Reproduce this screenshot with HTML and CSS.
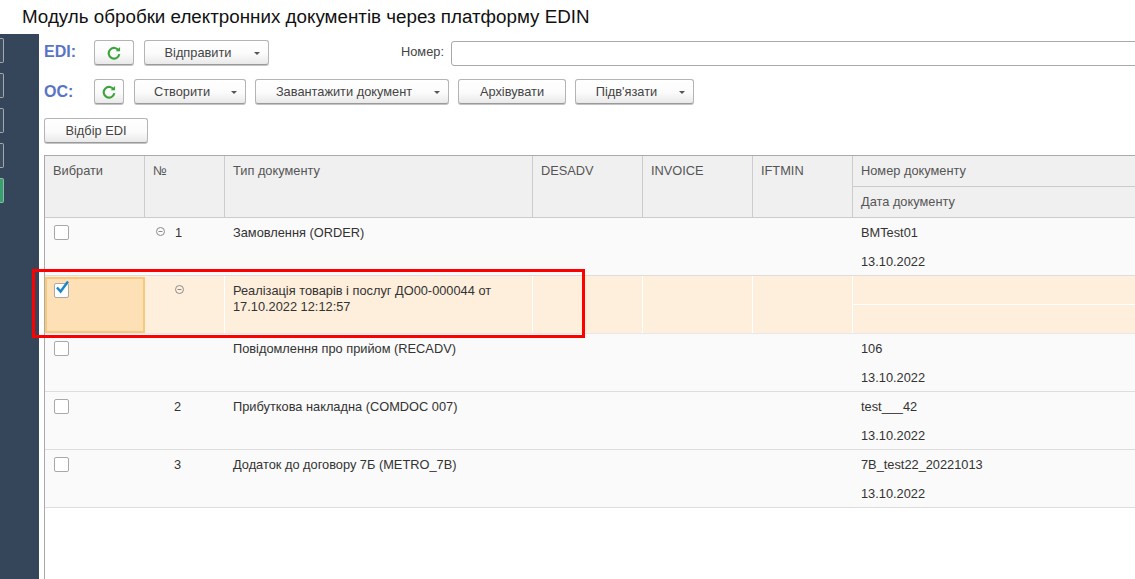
FILE: index.html
```html
<!DOCTYPE html>
<html lang="uk">
<head>
<meta charset="utf-8">
<title>EDIN</title>
<link rel="stylesheet" href="styles.css">
</head>
<body>
<h1 class="title">Модуль обробки електронних документів через платформу EDIN</h1>
<div class="main">
  <aside class="side">
    <span class="tab"></span><span class="tab"></span><span class="tab"></span><span class="tab"></span><span class="tab tab-on"></span>
  </aside>
  <div class="content">
    <div class="bar bar-edi">
      <span class="lbl lbl-edi">EDI:</span>
      <button class="btn btn-ref-wide"><svg class="ref" viewBox="0 0 12 12"><path d="M10.2 4.2A4.6 4.6 0 1 0 10.6 7" /><path class="ah" d="M7.4 4.6h3.8V.9z"/></svg></button>
      <button class="btn btn-send">Відправити<i class="car"></i></button>
      <span class="num-label">Номер:</span>
      <input class="num-input" type="text">
    </div>
    <div class="bar bar-oc">
      <span class="lbl lbl-oc">ОС:</span>
      <button class="btn btn-ref"><svg class="ref" viewBox="0 0 12 12"><path d="M10.2 4.2A4.6 4.6 0 1 0 10.6 7" /><path class="ah" d="M7.4 4.6h3.8V.9z"/></svg></button>
      <button class="btn btn-create">Створити<i class="car"></i></button>
      <button class="btn btn-load">Завантажити документ<i class="car"></i></button>
      <button class="btn btn-arch">Архівувати</button>
      <button class="btn btn-link">Підв'язати<i class="car"></i></button>
    </div>
    <div class="bar bar-filter">
      <button class="btn btn-filter">Відбір EDI</button>
    </div>
    <div class="grid">
      <div class="row head">
        <div class="c">Вибрати</div><div class="c">№</div><div class="c">Тип документу</div><div class="c">DESADV</div><div class="c">INVOICE</div><div class="c">IFTMIN</div>
        <div class="c stack"><div class="sub">Номер документу</div><div class="sub">Дата документу</div></div>
      </div>
      <div class="row">
        <div class="c"><span class="chk"></span></div>
        <div class="c n n-tree"><svg class="minus" viewBox="0 0 9 9"><circle cx="4.5" cy="4.5" r="4"/><path d="M2.5 4.5h4"/></svg>1</div>
        <div class="c">Замовлення (ORDER)</div><div class="c"></div><div class="c"></div><div class="c"></div>
        <div class="c stack"><div class="sub">BMTest01</div><div class="sub">13.10.2022</div></div>
      </div>
      <div class="row sel">
        <div class="c cur"><span class="chk"><svg class="tick" viewBox="0 0 16 16"><path d="M3 7.5l3.6 4L14 1.5"/></svg></span></div>
        <div class="c n"><svg class="minus" viewBox="0 0 9 9"><circle cx="4.5" cy="4.5" r="4"/><path d="M2.5 4.5h4"/></svg></div>
        <div class="c">Реалізація товарів і послуг ДО00-000044 от 17.10.2022 12:12:57</div><div class="c"></div><div class="c"></div><div class="c"></div>
        <div class="c stack"><div class="sub"></div><div class="sub"></div></div>
      </div>
      <div class="row">
        <div class="c"><span class="chk"></span></div><div class="c n"></div>
        <div class="c">Повідомлення про прийом (RECADV)</div><div class="c"></div><div class="c"></div><div class="c"></div>
        <div class="c stack"><div class="sub">106</div><div class="sub">13.10.2022</div></div>
      </div>
      <div class="row">
        <div class="c"><span class="chk"></span></div><div class="c n">2</div>
        <div class="c">Прибуткова накладна (COMDOC 007)</div><div class="c"></div><div class="c"></div><div class="c"></div>
        <div class="c stack"><div class="sub">test___42</div><div class="sub">13.10.2022</div></div>
      </div>
      <div class="row">
        <div class="c"><span class="chk"></span></div><div class="c n">3</div>
        <div class="c">Додаток до договору 7Б (METRO_7B)</div><div class="c"></div><div class="c"></div><div class="c"></div>
        <div class="c stack"><div class="sub">7B_test22_20221013</div><div class="sub">13.10.2022</div></div>
      </div>
    </div>
  </div>
</div>
<div class="mark"></div>
</body>
</html>
```
FILE: styles.css
```css
* { box-sizing: border-box; }
html, body { margin: 0; height: 100%; overflow: hidden; background: #fff; }
body { display: flex; flex-direction: column; width: 1135px; height: 579px; font: 12.8px/16px "Liberation Sans", Arial, sans-serif; color: #333; position: relative; }
.title { margin: 0; height: 34px; padding: 6px 0 0 22px; font: 400 18.8px/21px "Liberation Sans", Arial, sans-serif; color: #111; white-space: nowrap; flex: none; }
.main { flex: 1; display: flex; min-height: 0; }
.side { width: 39px; flex: none; background: #35465a; padding-top: 4px; display: flex; flex-direction: column; gap: 10px; align-items: flex-start; }
.tab { width: 4px; height: 25px; background: #3f4f62; border: 1px solid #a2a8ae; border-left: 0; border-radius: 0 2px 2px 0; }
.tab-on { background: #3a9f70; border-color: #8fb8a4; }
.content { flex: 1; min-width: 0; padding-left: 5px; display: flex; flex-direction: column; overflow: hidden; }
.bar { display: flex; align-items: flex-start; flex: none; white-space: nowrap; }
.bar-edi { height: 45px; padding-top: 6px; }
.bar-oc { height: 39px; }
.bar-filter { height: 37px; }
.lbl { font: 700 16px/20px "Liberation Sans", Arial, sans-serif; color: #5a74c4; width: 50px; flex: none; }
.lbl-edi { padding-top: 2px; }
.lbl-oc { padding-top: 3px; }
.btn { height: 25px; flex: none; position: relative; margin: 0; padding: 0; border: 1px solid #b4b4b4; border-bottom-color: #9a9a9a; border-radius: 3px; background: linear-gradient(#fff 0%, #fbfbfb 55%, #e9e9e9 100%); box-shadow: 0 1px 0 #c4c4c4; font: 12.8px/16px "Liberation Sans", Arial, sans-serif; color: #444; text-align: center; display: inline-flex; align-items: center; justify-content: center; }
.btn-ref-wide { width: 40px; margin: 0 10px 0 0; }
.btn-ref { width: 30px; margin: 0 10px 0 0; }
.btn-send { width: 125px; padding-right: 17px; }
.btn-create { width: 112px; margin-right: 9px; padding-right: 16px; }
.btn-load { width: 194px; margin-right: 9px; padding-right: 16px; }
.btn-arch { width: 108px; margin-right: 9px; }
.btn-link { width: 119px; padding-right: 16px; }
.btn-filter { width: 104px; }
.ref { width: 14px; height: 14px; fill: none; stroke: #3aa53a; stroke-width: 1.8; }
.ref .ah { fill: #3aa53a; stroke: none; }
.car { position: absolute; right: 8px; top: 11px; border: 3px solid transparent; border-top-color: #555; border-bottom: 0; }
.num-label { margin-left: 132px; width: 50px; flex: none; padding-top: 4px; color: #444; }
.num-input { width: 720px; height: 25px; flex: none; border: 1px solid #a9a9a9; border-radius: 3px; background: #fff; padding: 0; margin: 1px 0 0; }
.grid { flex: 1; width: 1100px; border-top: 1px solid #aaa; border-left: 1px solid #aaa; }
.row { display: grid; grid-template-columns: 100px 80px 308px 110px 110px 100px 1fr; height: 58px; border-bottom: 1px solid #ddd; background: #fafafa; color: #333; }
.head { height: 62px; background: #f0f0f0; color: #555; border-bottom-color: #ccc; }
.c { padding: 7px 8px 0; border-right: 1px solid #fafafa; min-width: 0; }
.head .c { border-right-color: #ccc; }
.stack { padding: 0; border-right: 0; display: flex; flex-direction: column; }
.sub { flex: 1; padding: 7px 8px 0; }
.head .sub:first-child { border-bottom: 1px solid #ccc; flex: none; height: 31px; }
.sel { background: #feefdc; border-bottom-color: #e8e8e8; }
.sel .c { border-right-color: #fff; }
.sel .stack { border-right: 0; }
.sel .sub:first-child { border-bottom: 1px solid #fff; flex: none; height: 29px; }
.sel .cur { margin-top: 1px; padding: 4px 6px 0; background: #fde0b5; border: 2px solid #f9c878; }
.chk { display: block; width: 15px; height: 15px; margin: 0 0 0 1px; border: 1px solid #a9a9a9; border-radius: 2px; background: #fff; position: relative; }
.tick { position: absolute; left: -1px; top: -4px; width: 16px; height: 16px; fill: none; stroke: #1a86c8; stroke-width: 2.4; }
.n { padding-left: 29px; }
.n-tree { padding-left: 11px; display: flex; align-items: flex-start; gap: 10px; }
.minus { display: block; width: 9px; height: 9px; margin-top: 2px; fill: none; stroke: #8a8a8a; stroke-width: 1; }
.sel .minus { margin-left: 1px; }
.mark { position: absolute; left: 32px; top: 269px; width: 553px; height: 69px; border: 3px solid #f00; }
```
